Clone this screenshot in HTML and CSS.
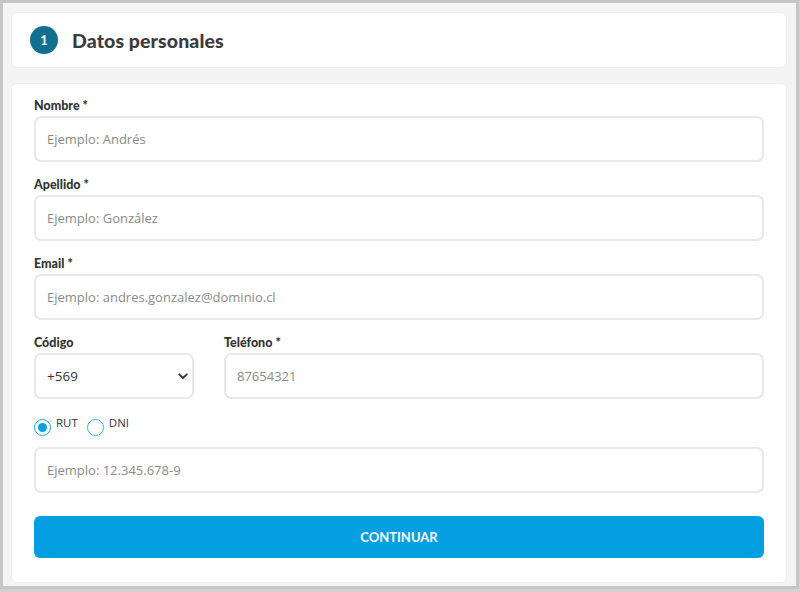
FILE: index.html
```html
<!DOCTYPE html>
<html lang="es">
<head>
<meta charset="utf-8">
<title>Datos personales</title>
<link rel="stylesheet" href="styles.css">
</head>
<body>
<div class="frame">
  <div class="card header">
    <span class="step">1</span>
    <h1 class="title">Datos personales</h1>
  </div>
  <form class="card form">
    <div class="group">
      <label class="label">Nombre *</label>
      <input class="field" type="text" placeholder="Ejemplo: Andrés">
    </div>
    <div class="group">
      <label class="label">Apellido *</label>
      <input class="field" type="text" placeholder="Ejemplo: González">
    </div>
    <div class="group">
      <label class="label">Email *</label>
      <input class="field" type="text" placeholder="Ejemplo: andres.gonzalez@dominio.cl">
    </div>
    <div class="row">
      <div class="group code">
        <label class="label">Código</label>
        <div class="select">
          <span class="select-value">+569</span>
          <svg class="chev" width="10" height="7" viewBox="0 0 10 7"><path d="M1.2 1.3 L5 5 L8.8 1.3" fill="none" stroke="#333" stroke-width="1.8" stroke-linecap="round" stroke-linejoin="round"/></svg>
        </div>
      </div>
      <div class="group phone">
        <label class="label">Teléfono *</label>
        <input class="field" type="text" placeholder="87654321">
      </div>
    </div>
    <div class="radios">
      <span class="radio checked"></span><span class="radio-text rut">RUT</span>
      <span class="radio"></span><span class="radio-text">DNI</span>
    </div>
    <div class="group last">
      <input class="field" type="text" placeholder="Ejemplo: 12.345.678-9">
    </div>
    <button class="btn" type="button">CONTINUAR</button>
  </form>
</div>
</body>
</html>
```

FILE: styles.css
```css
* { box-sizing: border-box; }
html, body { margin: 0; padding: 0; }
body { background: #d2d2d2; width: 800px; height: 592px; overflow: hidden; }
.frame {
  width: 799px;
  height: 589px;
  border: 3px solid #c6c6c6;
  background: #f4f4f4;
  padding: 9px 9px 0 8px;
  display: flex;
  flex-direction: column;
  gap: 15px;
}
.card {
  background: #fff;
  border-radius: 6px;
  border: 1px solid #eeeeee;
}
.header {
  height: 56px;
  flex: none;
  display: flex;
  align-items: center;
  padding-left: 18px;
  gap: 14px;
}
.step {
  width: 28px;
  height: 28px;
  border-radius: 50%;
  background: #126f90;
  color: #fff;
  font-family: Lato, "Open Sans", sans-serif;
  font-weight: 700;
  font-size: 13px;
  display: flex;
  align-items: center;
  justify-content: center;
}
.title {
  margin: 0;
  font-family: Lato, "Open Sans", sans-serif;
  font-weight: 900;
  font-size: 19.5px;
  color: #3b3b3b;
  letter-spacing: 0.1px;
}
.form {
  height: 500px;
  padding: 13px 22px 0 22px;
  display: flex;
  flex-direction: column;
}
.group { display: flex; flex-direction: column; margin-bottom: 14px; }
.label {
  font-family: Lato, "Open Sans", sans-serif;
  font-weight: 900;
  font-size: 12.5px;
  line-height: 17px;
  color: #333;
  margin-bottom: 2px;
}
.field, .select {
  height: 46px;
  border: 2px solid #e8e8e8;
  border-radius: 7px;
  background: #fff;
  padding: 0 11px;
  font-family: "Open Sans", sans-serif;
  font-size: 13px;
  color: #333;
  outline: none;
  width: 100%;
}
.field::placeholder { color: #8a8a8a; }
.row { display: flex; gap: 30px; }
.code { width: 160px; flex: none; }
.phone { flex: 1; }
.select {
  display: flex;
  align-items: center;
  justify-content: space-between;
  padding-right: 4px;
  font-size: 13.5px;
}
.select-value { color: #333; }
.radios {
  display: flex;
  align-items: flex-start;
  height: 20px;
  margin-top: 3px;
  margin-bottom: 11px;
}
.radio {
  width: 17px;
  height: 17px;
  border-radius: 50%;
  border: 1.6px solid #35b1e5;
  background: #fff;
  margin-top: 3px;
  position: relative;
  flex: none;
}
.radio.checked { border-color: #1aa2dd; }
.radio.checked::after {
  content: "";
  position: absolute;
  left: 2.5px; top: 2.5px;
  width: 9px; height: 9px;
  border-radius: 50%;
  background: #0c9fe0;
}
.radio-text {
  font-family: "Open Sans", sans-serif;
  font-size: 11.5px;
  color: #333;
  margin-left: 5px;
  line-height: 14px;
}
.radio-text.rut { margin-right: 9px; }
.group.last { margin-bottom: 23px; }
.btn {
  height: 42px;
  width: 100%;
  flex: none;
  border: none;
  border-radius: 6px;
  background: #039fe0;
  color: #fff;
  font-family: Lato, "Open Sans", sans-serif;
  font-weight: 700;
  font-size: 13px;
}
```
